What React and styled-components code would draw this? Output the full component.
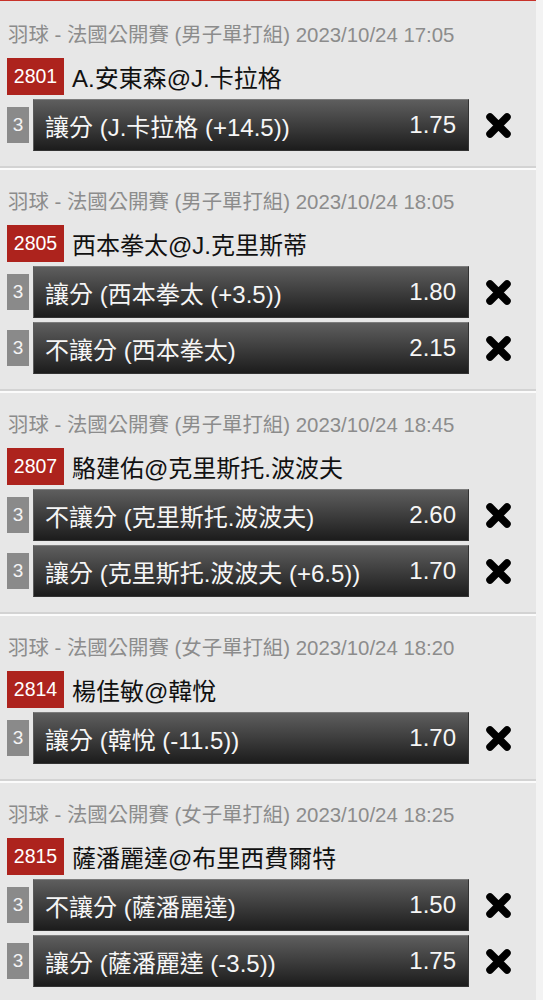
import React from 'react'
import styled, {createGlobalStyle} from 'styled-components'

const GlobalStyle = createGlobalStyle`
    html, body {
        margin: 0;
        padding: 0;
        background-color: #f3f3f3;
    }
    body {
        font-family: "Liberation Sans", "Noto Sans CJK TC", sans-serif;
    }
`

const Page = styled.div`
    width: 536px;
    border-top: 1px solid #c8322a;
    padding-top: 2px;
    background-color: #e7e7e7;
`
const Section = styled.div`
    padding: 18px 0 15px 7px;
    margin-bottom: 2px;
    border-bottom: 2px solid #d3d3d3;
    box-shadow: 0 2px 0 #fbfbfb;
`
const Header = styled.div`
    height: 28px;
    padding-left: 1px;
    color: #8c8c8c;
    font-size: 20.4px;
    line-height: 28px;
    white-space: nowrap;
`
const MatchRow = styled.div`
    display: flex;
    align-items: center;
    gap: 8px;
    margin-top: 9px;
    height: 37px;
`
const MatchNo = styled.span`
    display: flex;
    align-items: center;
    justify-content: center;
    width: 57px;
    height: 37px;
    background-color: #ad231d;
    color: #fff;
    font-size: 19.5px;
`
const Teams = styled.span`
    color: #111;
    font-size: 24px;
`
const Bets = styled.div`
    display: flex;
    flex-direction: column;
    gap: 4px;
    margin-top: 4px;
`
const BetRow = styled.div`
    display: flex;
    align-items: center;
    height: 52px;
`
const Level = styled.span`
    display: flex;
    align-items: center;
    justify-content: center;
    width: 22px;
    height: 36px;
    margin-right: 4px;
    background-color: #8a8a8a;
    color: #f4f4f4;
    font-size: 19px;
`
const BetButton = styled.div`
    box-sizing: border-box;
    display: flex;
    align-items: center;
    justify-content: space-between;
    width: 436px;
    height: 52px;
    padding: 0 12px 0 11px;
    border: 1px solid #333;
    border-top-color: #7c7c7c;
    border-left-color: #5a5a5a;
    background: linear-gradient(to bottom, #5e5e5e 0%, #3a3a3a 55%, #1c1c1c 100%);
    color: #f6f6f6;
    font-size: 24px;
    white-space: nowrap;
`
const Remove = styled.span`
    display: flex;
    align-items: center;
    margin-left: 16px;
`

function CrossIcon(){
    return (
        <svg width="27" height="27" viewBox="0 0 27 27">
            <path d="M5 5 L22 22 M22 5 L5 22" stroke="#000" strokeWidth="7.5" strokeLinecap="round" fill="none" />
        </svg>
    )
}

const matches = [
    {
        header: '羽球 - 法國公開賽 (男子單打組) 2023/10/24 17:05',
        no: '2801',
        teams: 'A.安東森@J.卡拉格',
        bets: [{label: '讓分 (J.卡拉格 (+14.5))', odds: '1.75'}],
    },
    {
        header: '羽球 - 法國公開賽 (男子單打組) 2023/10/24 18:05',
        no: '2805',
        teams: '西本拳太@J.克里斯蒂',
        bets: [
            {label: '讓分 (西本拳太 (+3.5))', odds: '1.80'},
            {label: '不讓分 (西本拳太)', odds: '2.15'},
        ],
    },
    {
        header: '羽球 - 法國公開賽 (男子單打組) 2023/10/24 18:45',
        no: '2807',
        teams: '駱建佑@克里斯托.波波夫',
        bets: [
            {label: '不讓分 (克里斯托.波波夫)', odds: '2.60'},
            {label: '讓分 (克里斯托.波波夫 (+6.5))', odds: '1.70'},
        ],
    },
    {
        header: '羽球 - 法國公開賽 (女子單打組) 2023/10/24 18:20',
        no: '2814',
        teams: '楊佳敏@韓悅',
        bets: [{label: '讓分 (韓悅 (-11.5))', odds: '1.70'}],
    },
    {
        header: '羽球 - 法國公開賽 (女子單打組) 2023/10/24 18:25',
        no: '2815',
        teams: '薩潘麗達@布里西費爾特',
        bets: [
            {label: '不讓分 (薩潘麗達)', odds: '1.50'},
            {label: '讓分 (薩潘麗達 (-3.5))', odds: '1.75'},
        ],
    },
]

function App(){
    return (
        <>
            <GlobalStyle />
            <Page>
                {matches.map(m => (
                    <Section key={m.no}>
                        <Header>{m.header}</Header>
                        <MatchRow>
                            <MatchNo>{m.no}</MatchNo>
                            <Teams>{m.teams}</Teams>
                        </MatchRow>
                        <Bets>
                            {m.bets.map(b => (
                                <BetRow key={b.label}>
                                    <Level>3</Level>
                                    <BetButton>
                                        <span>{b.label}</span>
                                        <span>{b.odds}</span>
                                    </BetButton>
                                    <Remove>
                                        <CrossIcon />
                                    </Remove>
                                </BetRow>
                            ))}
                        </Bets>
                    </Section>
                ))}
            </Page>
        </>
    )
}

export default App
